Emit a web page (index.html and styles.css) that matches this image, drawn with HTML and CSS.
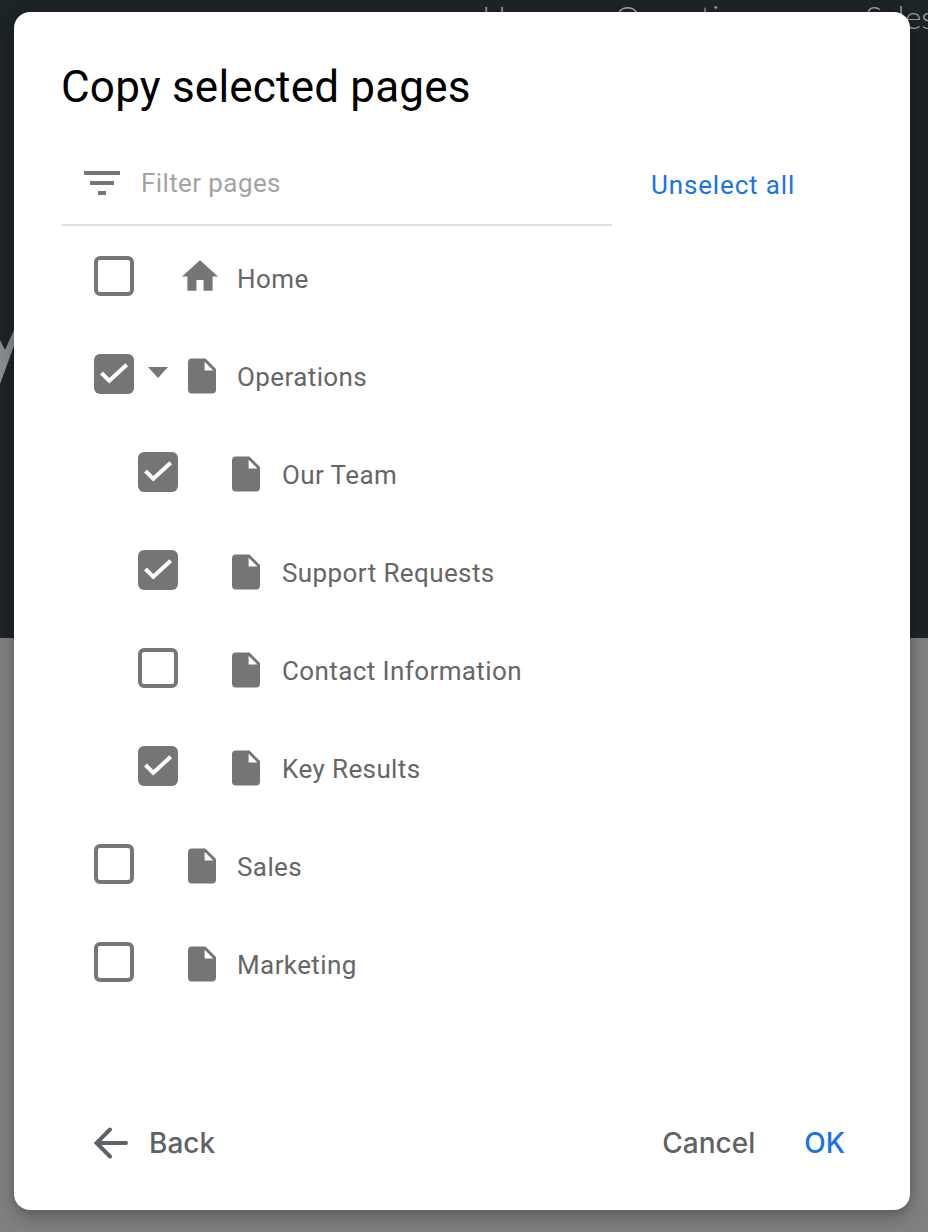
FILE: index.html
```html
<!DOCTYPE html>
<html lang="en">
<head>
<meta charset="utf-8">
<title>Copy selected pages</title>
<link rel="stylesheet" href="styles.css">
</head>
<body>
<div class="page">
  <header class="hero">
    <nav class="nav"><span class="nav-home">Home</span><span class="nav-ops">Operations</span><span>Sales</span></nav>
    <svg class="wedge" viewBox="0 0 14 60" width="14" height="60"><polygon points="0,14 5,24 14,4 14,20 0,58" fill="#8a8d8d"/></svg>
  </header>
  <div class="lower"></div>
</div>
<section class="dialog">
  <h1 class="title">Copy selected pages</h1>
  <div class="toolbar">
    <div class="filter">
      <span class="filter-icon"><i class="bar bar-1"></i><i class="bar bar-2"></i><i class="bar bar-3"></i></span>
      <span class="filter-text">Filter pages</span>
    </div>
    <a class="unselect">Unselect all</a>
  </div>
  <ul class="tree">
    <li class="row">
      <span class="check"></span><span class="caret-slot"></span>
      <span class="icon-slot"><svg class="home" viewBox="2 3 20 17"><path d="M10 20v-6h4v6h5v-8h3L12 3 2 12h3v8z"/></svg></span>
      <span class="label">Home</span>
    </li>
    <li class="row">
      <span class="check on"><svg viewBox="0 0 40 40"><polyline points="7.5,19 15.3,26.8 32.7,10.7"/></svg></span><span class="caret-slot"><i class="caret"></i></span>
      <span class="icon-slot"><svg class="doc" viewBox="4 2 16 20"><path d="M6 2c-1.1 0-2 .9-2 2v16c0 1.1.9 2 2 2h12c1.100 0 2-.9 2-2V8l-6-6H6zm7.500 6.800V3.800l5 5h-5z"/></svg></span>
      <span class="label">Operations</span>
    </li>
    <li class="row sub">
      <span class="check on"><svg viewBox="0 0 40 40"><polyline points="7.5,19 15.3,26.8 32.7,10.7"/></svg></span><span class="caret-slot"></span>
      <span class="icon-slot"><svg class="doc" viewBox="4 2 16 20"><path d="M6 2c-1.1 0-2 .9-2 2v16c0 1.1.9 2 2 2h12c1.100 0 2-.9 2-2V8l-6-6H6zm7.500 6.800V3.800l5 5h-5z"/></svg></span>
      <span class="label">Our Team</span>
    </li>
    <li class="row sub">
      <span class="check on"><svg viewBox="0 0 40 40"><polyline points="7.5,19 15.3,26.8 32.7,10.7"/></svg></span><span class="caret-slot"></span>
      <span class="icon-slot"><svg class="doc" viewBox="4 2 16 20"><path d="M6 2c-1.1 0-2 .9-2 2v16c0 1.1.9 2 2 2h12c1.100 0 2-.9 2-2V8l-6-6H6zm7.500 6.800V3.800l5 5h-5z"/></svg></span>
      <span class="label">Support Requests</span>
    </li>
    <li class="row sub">
      <span class="check"></span><span class="caret-slot"></span>
      <span class="icon-slot"><svg class="doc" viewBox="4 2 16 20"><path d="M6 2c-1.1 0-2 .9-2 2v16c0 1.1.9 2 2 2h12c1.100 0 2-.9 2-2V8l-6-6H6zm7.500 6.800V3.800l5 5h-5z"/></svg></span>
      <span class="label">Contact Information</span>
    </li>
    <li class="row sub">
      <span class="check on"><svg viewBox="0 0 40 40"><polyline points="7.5,19 15.3,26.8 32.7,10.7"/></svg></span><span class="caret-slot"></span>
      <span class="icon-slot"><svg class="doc" viewBox="4 2 16 20"><path d="M6 2c-1.1 0-2 .9-2 2v16c0 1.1.9 2 2 2h12c1.100 0 2-.9 2-2V8l-6-6H6zm7.500 6.800V3.800l5 5h-5z"/></svg></span>
      <span class="label">Key Results</span>
    </li>
    <li class="row">
      <span class="check"></span><span class="caret-slot"></span>
      <span class="icon-slot"><svg class="doc" viewBox="4 2 16 20"><path d="M6 2c-1.1 0-2 .9-2 2v16c0 1.1.9 2 2 2h12c1.100 0 2-.9 2-2V8l-6-6H6zm7.500 6.800V3.800l5 5h-5z"/></svg></span>
      <span class="label">Sales</span>
    </li>
    <li class="row">
      <span class="check"></span><span class="caret-slot"></span>
      <span class="icon-slot"><svg class="doc" viewBox="4 2 16 20"><path d="M6 2c-1.1 0-2 .9-2 2v16c0 1.1.9 2 2 2h12c1.100 0 2-.9 2-2V8l-6-6H6zm7.500 6.800V3.800l5 5h-5z"/></svg></span>
      <span class="label">Marketing</span>
    </li>
  </ul>
  <footer class="footer">
    <a class="back">
      <svg class="arrow" viewBox="0 0 34 32"><path d="M32 16H3M16 2.500 2.500 16 16 29.500"/></svg>
      <span>Back</span>
    </a>
    <div class="actions"><a class="cancel">Cancel</a><a class="ok">OK</a></div>
  </footer>
</section>
</body>
</html>
```
FILE: styles.css
```css
* { box-sizing: border-box; }
html, body { margin: 0; height: 100%; }
body { overflow: hidden; font-family: Roboto, "Liberation Sans", sans-serif; background: #808080; }
a { display: inline-block; }

.page { display: flex; flex-direction: column; height: 1232px; }
.hero { height: 638px; background: #1d2428; position: relative; overflow: hidden; }
.lower { flex: 1; background: #808080; }
.nav {
  display: flex;
  padding-left: 482px;
  margin-top: -3px;
  font: 300 32px/40px Lato, Roboto, sans-serif;
  color: #9a9fa2;
  white-space: nowrap;
}
.nav-home { margin-right: 49px; }
.nav-ops { margin-right: 97px; }
.wedge { position: absolute; left: 0; top: 326px; }

.dialog {
  position: absolute;
  left: 14px;
  top: 12px;
  width: 896px;
  height: 1198px;
  background: #fff;
  border-radius: 16px;
  box-shadow: 0 8px 20px rgba(0, 0, 0, .22), 0 2px 8px rgba(0, 0, 0, .14);
  padding: 0 48px;
  display: flex;
  flex-direction: column;
}
.title { margin: 0 0 0 -1px; padding-top: 48px; font-size: 44px; line-height: 54px; font-weight: 400; letter-spacing: .2px; color: #000; height: 118px; white-space: nowrap; }

.toolbar { display: flex; align-items: center; height: 96px; }
.filter { width: 550px; height: 96px; display: flex; align-items: center; padding: 12px 0 0 22px; border-bottom: 2px solid #e0e0e0; }
.filter-icon { width: 36px; height: 24px; display: flex; flex-direction: column; align-items: center; justify-content: space-between; margin-right: 21px; }
.bar { display: block; height: 4px; background: #757575; }
.bar-1 { width: 36px; }
.bar-2 { width: 24px; }
.bar-3 { width: 8px; }
.filter-text { font-size: 26px; letter-spacing: .4px; color: #a3a3a3; }
.unselect { margin-left: 39px; font-size: 26px; font-weight: 450; letter-spacing: .85px; color: #1a73e8; margin-top: 14px; }

.tree { list-style: none; margin: 0; padding: 0; }
.row { height: 98px; display: flex; align-items: center; padding-left: 32px; }
.row.sub { padding-left: 76px; }
.row.sub .label { margin-left: 1px; }
.check { width: 40px; height: 40px; flex: none; border: 4px solid #757575; border-radius: 6px; background: #fff; margin-top: 2px; }
.check.on { border: 0; background: #757575; }
.check svg { display: block; width: 40px; height: 40px; }
.check polyline { fill: none; stroke: #fff; stroke-width: 4; }
.caret-slot { width: 48px; flex: none; display: flex; justify-content: center; margin-top: -1px; }
.caret { display: block; width: 0; height: 0; border-left: 10px solid transparent; border-right: 10px solid transparent; border-top: 11px solid #757575; }
.icon-slot { width: 55px; flex: none; display: flex; }
.icon-slot svg { display: block; fill: #757575; }
.home { width: 36px; height: 31px; margin-top: 1px; }
.doc { width: 28px; height: 36px; margin: 6px 0 0 6px; }
.label { font-size: 26px; letter-spacing: .4px; color: #666; margin-top: 8px; white-space: nowrap; }

.footer { margin-top: auto; height: 85px; display: flex; justify-content: space-between; font: 500 28px/36px Inter, Roboto, sans-serif; padding: 0 17px 0 32px; }
.back { display: flex; align-items: flex-start; color: #5f6368; }
.arrow { width: 34px; height: 32px; margin-right: 21px; margin-top: 2px; fill: none; stroke: #5f6368; stroke-width: 4; stroke-linecap: round; }
.actions { display: flex; gap: 49px; }
.cancel { color: #5f6368; }
.ok { color: #1a73e8; }
```
